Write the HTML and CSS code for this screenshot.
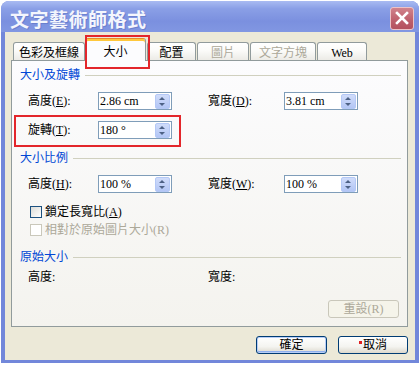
FILE: index.html
```html
<!DOCTYPE html>
<html lang="zh-Hant">
<head>
    <meta charset="UTF-8">
    <title>文字藝術師格式</title>
    <link rel="stylesheet" href="styles.css">
</head>
<body>

<div class="window">
    <div class="titlebar">
        <span class="title">文字藝術師格式</span>
        <span class="close">
            <svg width="22" height="21" viewBox="0 0 22 21">
                <path d="M6 5 L16 15 M16 5 L6 15" stroke="#fff" stroke-width="2.6" stroke-linecap="square"/>
            </svg>
        </span>
    </div>

    <div class="client">
        <div class="tabs">
            <div class="tab tab-color">色彩及框線</div>
            <div class="tab tab-active">大小</div>
            <div class="tab tab-layout">配置</div>
            <div class="tab tab-disabled tab-picture">圖片</div>
            <div class="tab tab-disabled tab-textbox">文字方塊</div>
            <div class="tab tab-web">Web</div>
        </div>

        <div class="panel">
            <div class="group-head head-size"><span>大小及旋轉</span><i></i></div>
            <div class="row row-height">
                <span class="lbl">高度(<u>E</u>):</span>
                <div class="spin"><span>2.86 cm</span><b class="arrows"></b></div>
                <span class="lbl lbl-right">寬度(<u>D</u>):</span>
                <div class="spin"><span>3.81 cm</span><b class="arrows"></b></div>
            </div>
            <div class="row row-rotate">
                <span class="lbl">旋轉(<u>T</u>):</span>
                <div class="spin"><span>180 °</span><b class="arrows"></b></div>
            </div>

            <div class="group-head head-scale"><span>大小比例</span><i></i></div>
            <div class="row row-scale">
                <span class="lbl">高度(<u>H</u>):</span>
                <div class="spin"><span>100 %</span><b class="arrows"></b></div>
                <span class="lbl lbl-right">寬度(<u>W</u>):</span>
                <div class="spin"><span>100 %</span><b class="arrows"></b></div>
            </div>
            <div class="check check-lock"><span class="box"></span>鎖定長寬比(<u>A</u>)</div>
            <div class="check check-relative disabled"><span class="box"></span>相對於原始圖片大小(R)</div>

            <div class="group-head head-orig"><span>原始大小</span><i></i></div>
            <div class="row row-orig">
                <span class="lbl">高度:</span>
                <span class="spacer"></span>
                <span class="lbl lbl-right">寬度:</span>
            </div>
            <div class="reset-row">
                <button class="btn btn-disabled">重設(R)</button>
            </div>
        </div>

        <div class="actions">
            <button class="btn btn-default">確定</button>
            <button class="btn"><span class="dot"></span>取消</button>
        </div>
    </div>
</div>

</body>
</html>
```

FILE: styles.css
```css
* {
    box-sizing: border-box;
}
body {
    margin: 0;
    background: #fff;
    font: 12px/14px "Liberation Serif", "Noto Sans CJK TC", serif;
    color: #000;
}
u {
    text-decoration: underline;
    text-underline-offset: 1px;
}

/* window frame */
.window {
    width: 418px;
    height: 362px;
    margin: 1px 0 0 1px;
    display: flex;
    flex-direction: column;
    border-radius: 8px 8px 0 0;
    overflow: hidden;
    background: #7287da;
}
.titlebar {
    height: 31px;
    display: flex;
    align-items: flex-start;
    padding: 0 5px 0 9px;
    background: linear-gradient(#a9bbf2, #8a9fe6 25%, #7b90df 65%, #8197e2);
}
.title {
    flex: 1;
    margin-top: 8px;
    font: bold 19px/1 "Noto Sans CJK TC", sans-serif;
    letter-spacing: 0.5px;
    color: #f4f6fd;
    text-shadow: 1px 1px 0 rgba(60, 80, 160, 0.3);
}
.close {
    width: 24px;
    height: 23px;
    margin-top: 6px;
    display: flex;
    align-items: center;
    justify-content: center;
    border: 1px solid #ecc3c7;
    border-radius: 3px;
    background: linear-gradient(#d1838c, #bd5f6b 60%, #b4525f);
}
.client {
    flex: 1;
    margin: 0 4px 3px;
    padding: 6px 7px 0 6px;
    background: #ece9d8;
}

/* tabs */
.tabs {
    display: flex;
    align-items: flex-end;
    height: 22px;
    padding-left: 2px;
}
.tab {
    height: 18px;
    padding-top: 3px;
    margin-right: 1px;
    text-align: center;
    border: 1px solid #919b9c;
    border-bottom: none;
    border-radius: 3px 3px 0 0;
    background: linear-gradient(#ffffff, #fbfbf9 45%, #ecebe6);
}
.tab-color { width: 72px; }
.tab-layout { width: 49px; }
.tab-picture { width: 52px; }
.tab-textbox { width: 66px; }
.tab-web { width: 50px; }
.tab-disabled {
    color: #aca899;
}
.tab-active {
    position: relative;
    z-index: 2;
    width: 61px;
    height: 23px;
    margin-left: -1px;
    margin-bottom: -1px;
    padding-top: 6px;
    border-top-color: #e68b2c;
    background: #fcfcfe;
    box-shadow: inset 0 2px 0 #ffc83c;
}
.tab-active::after {
    content: "";
    position: absolute;
    left: -1px;
    top: -4px;
    width: 61px;
    height: 30px;
    border: 2px solid #e3262b;
}

/* panel */
.panel {
    position: relative;
    z-index: 1;
    height: 267px;
    padding: 0 6px 0 8px;
    border: 1px solid #919b9c;
    background: linear-gradient(#fcfcfe, #f4f3ee);
}
.group-head {
    display: flex;
    align-items: center;
    height: 14px;
    color: #0046d5;
}
.group-head i {
    flex: 1;
    height: 1px;
    margin-left: 5px;
    background: #d0d0bf;
}
.head-size { margin-top: 7px; }
.head-scale { margin-top: 12px; }
.head-orig { margin-top: 14px; }

.row {
    position: relative;
    display: flex;
    align-items: center;
    height: 18px;
    padding-left: 8px;
}
.row-height { margin-top: 10px; }
.row-rotate { margin-top: 11px; }
.row-scale { margin-top: 10px; }
.row-orig { margin-top: 6px; height: 14px; }
.row-rotate::after {
    content: "";
    position: absolute;
    left: -6px;
    top: -6px;
    width: 163px;
    height: 28px;
    border: 2px solid #e3262b;
}
.lbl {
    width: 70px;
    white-space: nowrap;
}
.lbl-right {
    width: 76px;
    margin-left: 36px;
}
.spacer {
    width: 74px;
}
.spin {
    width: 74px;
    height: 18px;
    display: flex;
    align-items: center;
    justify-content: space-between;
    padding: 0 1px 0 1px;
    border: 1px solid #7f9db9;
    background: #fff;
    white-space: nowrap;
}
.arrows {
    position: relative;
    width: 15px;
    height: 15px;
    border-radius: 2px;
    border: 1px solid #b4c8f6;
    background: linear-gradient(#d0dcfa, #b3c6f5);
}
.arrows::before,
.arrows::after {
    content: "";
    position: absolute;
    left: 3px;
    border-left: 3.5px solid transparent;
    border-right: 3.5px solid transparent;
}
.arrows::before {
    top: 2px;
    border-bottom: 3.5px solid #4d6185;
}
.arrows::after {
    bottom: 2px;
    border-top: 3.5px solid #4d6185;
}

/* checkboxes */
.check {
    display: flex;
    align-items: center;
    height: 12px;
    padding-left: 10px;
    white-space: nowrap;
}
.check-lock { margin-top: 13px; }
.check-relative { margin-top: 6px; }
.box {
    width: 12px;
    height: 12px;
    margin-right: 3px;
    border: 1px solid #1c5180;
    background: linear-gradient(135deg, #dcdcd7, #fff);
}
.check.disabled {
    color: #aca899;
}
.check.disabled .box {
    border-color: #cac8bb;
    background: #fff;
}

/* buttons */
.reset-row {
    display: flex;
    justify-content: flex-end;
    margin-top: 16px;
    margin-right: 2px;
}
.btn {
    width: 71px;
    height: 18px;
    padding: 0;
    font: inherit;
    line-height: 14px;
    color: #000;
    border: 1px solid #003c74;
    border-radius: 3px;
    background: linear-gradient(#ffffff, #f4f4f0 60%, #dcd8cd);
}
.btn-default {
    box-shadow: inset 0 0 0 1px #b8cef7, inset 0 -1px 0 1px #8fb0ee;
}
.btn-disabled {
    color: #aca899;
    border-color: #c9c7ba;
    background: #f5f4ea;
}
.actions {
    display: flex;
    justify-content: flex-end;
    gap: 11px;
    margin-top: 9px;
}
.actions .btn:last-child {
    width: 70px;
}
.dot {
    display: inline-block;
    width: 3px;
    height: 3px;
    margin-right: 1px;
    vertical-align: 5px;
    background: #e02020;
}
```
